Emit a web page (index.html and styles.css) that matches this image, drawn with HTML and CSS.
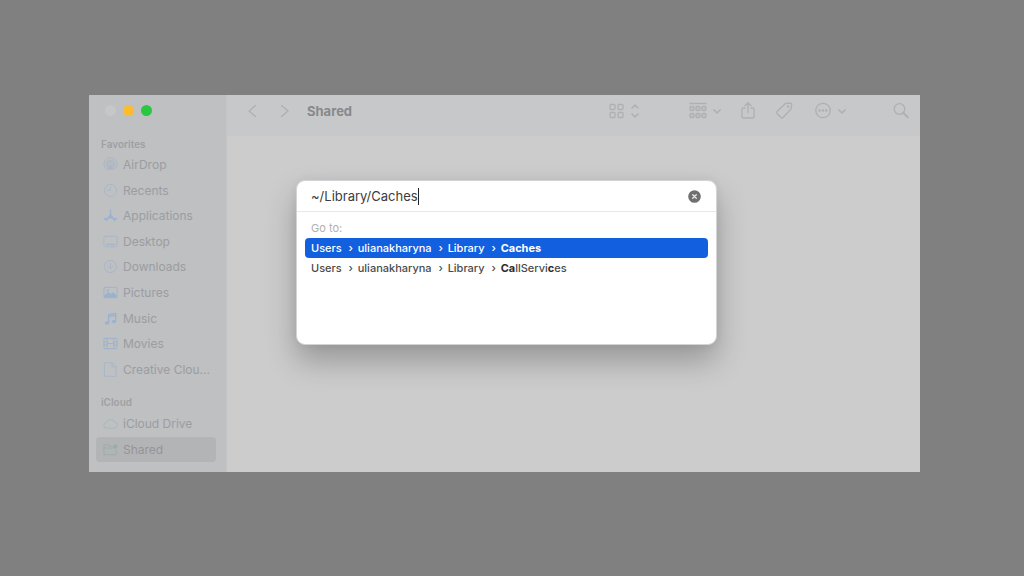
FILE: index.html
```html
<!DOCTYPE html>
<html lang="en">
<head>
<meta charset="utf-8">
<meta name="viewport" content="width=device-width, initial-scale=1">
<title>Shared</title>
<link rel="stylesheet" href="styles.css">
</head>
<body>
<div class="window">
  <aside class="sidebar">
    <div class="lights">
      <button class="light" aria-label="Close"></button>
      <button class="light light-min" aria-label="Minimize"></button>
      <button class="light light-max" aria-label="Zoom"></button>
    </div>
    <h2 class="group">Favorites</h2>
    <nav class="places favorites" aria-label="Favorites">
      <a class="place" href="#"><svg class="icon" viewBox="0 0 16 16"><path d="M4 13.500A7 7 0 1 1 12 13.500M5 11A4 4 0 1 1 11 11"/><path d="M8 8l3 5.500H5z" fill="currentColor" stroke="none"/><circle cx="8" cy="8" r="5.500" fill="currentColor" fill-opacity=".4" stroke="none"/></svg>AirDrop</a>
      <a class="place" href="#"><svg class="icon" viewBox="0 0 16 16"><circle cx="8" cy="8" r="6.500"/><path d="M8 4.500V8H5"/></svg>Recents</a>
      <a class="place" href="#"><svg class="icon strong" viewBox="0 0 16 16"><path d="M8 2.500v5L3.500 13M8 7.500l4.500 5.500M5.500 10.500h5M1.500 11.500h3M11.500 11.500h3" stroke-width="1.600"/></svg>Applications</a>
      <a class="place" href="#"><svg class="icon" viewBox="0 0 16 16"><rect x="1" y="2.500" width="14" height="11" rx="1.500"/><path d="M4 11h8" stroke-width="2"/></svg>Desktop</a>
      <a class="place" href="#"><svg class="icon" viewBox="0 0 16 16"><circle cx="8" cy="8" r="6.500"/><path d="M8 4.500v6M5.500 8.200L8 10.700l2.500-2.500"/></svg>Downloads</a>
      <a class="place" href="#"><svg class="icon strong" viewBox="0 0 16 16"><rect x="1" y="2.500" width="14" height="11" rx="1.500"/><path d="M2 11l3.500-3 3 2 2.500-2 3 3v2H2z" fill="currentColor"/><circle cx="5" cy="5.800" r=".8"/></svg>Pictures</a>
      <a class="place" href="#"><svg class="icon strong" viewBox="0 0 16 16"><path d="M6 12.500V4l7.500-1.500v8.500M6 6l7.500-1.500" stroke-width="1.500"/><ellipse cx="4.200" cy="12.800" rx="1.900" ry="1.300" fill="currentColor"/><ellipse cx="11.700" cy="11.300" rx="1.900" ry="1.300" fill="currentColor"/></svg>Music</a>
      <a class="place" href="#"><svg class="icon strong" viewBox="0 0 16 16"><rect x="1" y="2.500" width="14" height="11" rx="1"/><path d="M4.500 3v10M11.500 3v10M4.500 8h7M1.500 6.300h3M1.500 9.700h3M11.500 6.300h3M11.500 9.700h3"/></svg>Movies</a>
      <a class="place" href="#"><svg class="icon" viewBox="0 0 16 16"><path d="M2 .7h7.500l4.500 4.500v10.100H2zM9.500 .7v4.500H14"/></svg>Creative Clou...</a>
    </nav>
    <h2 class="group">iCloud</h2>
    <nav class="places cloud" aria-label="iCloud">
      <a class="place" href="#"><svg class="icon" viewBox="0 0 16 16"><path d="M4 13a3 3 0 0 1-.2-6 4.400 4.400 0 0 1 8.400-.4 3.200 3.200 0 0 1 .1 6.400z"/></svg>iCloud Drive</a>
      <a class="place current" href="#" aria-current="page"><svg class="icon" viewBox="0 0 16 16"><path d="M9 4.500H6.500L5.500 3H1v10.500h13V8.500M1 6.500h9"/><circle cx="13" cy="4.800" r="2" fill="currentColor"/></svg>Shared</a>
    </nav>
  </aside>
  <main class="content">
    <header class="toolbar">
      <button class="tool back" aria-label="Back"><svg width="10" height="16" viewBox="0 0 10 16"><path d="M8.500 2.500L2 8l6.500 5.500"/></svg></button>
      <button class="tool forward" aria-label="Forward"><svg width="10" height="16" viewBox="0 0 10 16"><path d="M1.500 2.500L8 8l-6.500 5.500"/></svg></button>
      <h1 class="title">Shared</h1>
      <button class="tool view" aria-label="View as icons"><svg width="30" height="16" viewBox="0 0 30 16"><rect x="1" y="1.500" width="5" height="5" rx="1"/><rect x="9" y="1.500" width="5" height="5" rx="1"/><rect x="1" y="9.500" width="5" height="5" rx="1"/><rect x="9" y="9.500" width="5" height="5" rx="1"/><path d="M23 5l3-3 3 3M23 11l3 3 3-3" stroke-width="1.500"/></svg></button>
      <button class="tool arrange" aria-label="Group items"><svg width="32" height="18" viewBox="0 0 32 18"><path d="M1 1.500h16"/><path d="M25 8l3 3 3-3" stroke-width="1.700"/><g fill="currentColor" fill-opacity=".3"><rect x="1" y="4.500" width="4" height="4" rx="1"/><rect x="7" y="4.500" width="4" height="4" rx="1"/><rect x="13" y="4.500" width="4" height="4" rx="1"/><rect x="1" y="11.500" width="4" height="4" rx="1"/><rect x="7" y="11.500" width="4" height="4" rx="1"/><rect x="13" y="11.500" width="4" height="4" rx="1"/></g></svg></button>
      <button class="tool share" aria-label="Share"><svg width="16" height="18" viewBox="0 0 16 18"><path d="M5 6H3q-1 0-1 1v8q0 1 1 1h10q1 0 1-1V7q0-1-1-1h-2M8 10.500V1M5 3.800L8 .8l3 3"/></svg></button>
      <button class="tool tag" aria-label="Tags"><svg width="18" height="18" viewBox="0 0 18 18"><path d="M10.500 1.500l5-.4q1.200 0 1.200 1.200L16 7l-8 8.500q-1 1-2 0l-4-4q-1-1 0-2z"/><circle cx="13" cy="4.500" r=".6"/></svg></button>
      <button class="tool more" aria-label="More"><svg width="32" height="18" viewBox="0 0 32 18"><circle cx="9" cy="8.500" r="7.200"/><path d="M25 8l3 3 3-3" stroke-width="1.700"/><circle cx="5.700" cy="8.500" r=".6"/><circle cx="9" cy="8.500" r=".6"/><circle cx="12.300" cy="8.500" r=".6"/></svg></button>
      <button class="tool search" aria-label="Search"><svg width="16" height="16" viewBox="0 0 16 16"><circle cx="6.500" cy="6" r="5.300"/><path d="M10.500 10l4.300 4.300" stroke-width="2"/></svg></button>
    </header>
  </main>
  <section class="dialog" role="dialog" aria-label="Go to folder">
    <div class="path-bar">
      <input class="path" type="text" value="~/Library/Caches" aria-label="Folder path" spellcheck="false"><span class="caret"></span>
      <button class="clear" aria-label="Clear"><svg width="13" height="13" viewBox="0 0 13 13"><circle cx="6.500" cy="6.500" r="6.300" fill="#707070" stroke="none"/><path d="M4.700 4.700l3.600 3.600M8.300 4.700L4.700 8.300" stroke="#e8e8e8" stroke-width="1.300"/></svg></button>
    </div>
    <div class="results">
      <h2 class="hint">Go to:</h2>
      <a class="result selected" href="#"><span>Users</span><i class="sep">›</i><span>ulianakharyna</span><i class="sep">›</i><span>Library</span><i class="sep">›</i><b>Caches</b></a>
      <a class="result" href="#"><span>Users</span><i class="sep">›</i><span>ulianakharyna</span><i class="sep">›</i><span>Library</span><i class="sep">›</i><span><b>Ca</b>llServi<b>c</b>es</span></a>
    </div>
  </section>
</div>
</body>
</html>
```
FILE: styles.css
```css
* { box-sizing: border-box; }

body {
  margin: 0;
  min-height: 100vh;
  display: flex;
  padding: 95px 104px 104px 89px;
  background: #808080;
  font-family: Inter, "Liberation Sans", sans-serif;
  font-size: 12px;
}

a { color: inherit; text-decoration: none; }
h1, h2 { margin: 0; }
button { border: 0; padding: 0; background: none; color: inherit; }

svg {
  display: block;
  fill: none;
  stroke: currentColor;
  stroke-linecap: round;
  stroke-linejoin: round;
}

.window {
  position: relative;
  flex: 1;
  display: flex;
  background: #cccccc;
}

.sidebar {
  width: 138px;
  flex: none;
  padding: 10px 10px 10px 7px;
  background: #bec0c2;
  border-right: 1px solid #c4c5c6;
  color: #9b9da0;
}

.lights {
  display: flex;
  gap: 7px;
  padding-left: 9px;
  margin-bottom: 21px;
}

.light {
  width: 11px;
  height: 11px;
  border-radius: 50%;
  background: #c6c7c8;
}

.light-min { background: #fdbc2e; }
.light-max { background: #28c840; }

.group {
  padding-left: 5px;
  font-size: 10px;
  font-weight: 600;
  line-height: 14px;
  color: #9fa1a3;
}

.places {
  display: grid;
  grid-auto-rows: 1fr;
}

.favorites { height: 230px; margin: 1px 0 13px; }
.cloud { height: 51px; margin-top: 2px; }

.place {
  display: flex;
  align-items: center;
  gap: 5px;
  padding-left: 7px;
  border-radius: 4px;
}

.current { background: #b3b4b6; color: #939597; }

.icon {
  width: 15px;
  height: 15px;
  flex: none;
  color: #a9b5c5;
}

.icon.strong { color: #9bb2cf; }
.cloud .icon { color: #a5b7b9; }
.cloud .current .icon { color: #9aadae; }

.content { flex: 1; }

.toolbar {
  display: flex;
  align-items: center;
  height: 41px;
  padding: 0 11px 10px 20px;
  background: #c7c8ca;
  color: #aeb0b2;
}

.tool svg { stroke-width: 1.3; }
.forward { margin: 0 17px 0 23px; }

.title {
  flex: 1;
  font-size: 13px;
  font-weight: 700;
  color: #88898b;
}

.arrange { margin-left: 50px; }
.share { margin-left: 19px; }
.tag { margin-left: 19px; }
.more { margin-left: 21px; }
.search { margin-left: 47px; }

.dialog {
  position: absolute;
  top: 85px;
  left: 207px;
  width: 421px;
  min-height: 165px;
  background: #ffffff;
  border: 1px solid #d4d4d4;
  border-radius: 9px;
  box-shadow: 0 16px 30px rgba(0, 0, 0, 0.26), 0 0 10px rgba(0, 0, 0, 0.06);
  color: #4a4a4a;
}

.path-bar {
  display: flex;
  align-items: center;
  height: 31px;
  padding: 0 15px 0 14px;
  border-bottom: 1px solid #e8e8e8;
}

.path {
  field-sizing: content;
  border: 0;
  padding: 0;
  outline: 0;
  background: none;
  font-family: inherit;
  font-size: 13px;
  color: #3c3c3c;
}

.caret { width: 1px; height: 17px; background: #222222; }
.clear { margin-left: auto; }

.results { padding: 9px 8px; }

.hint {
  padding: 0 6px;
  margin-bottom: 3px;
  font-size: 11px;
  font-weight: 400;
  line-height: 14px;
  color: #b0b0b0;
}

.result {
  display: flex;
  padding: 0 6px;
  border-radius: 4px;
  font-size: 11px;
  font-weight: 500;
  line-height: 20px;
}

.selected { background: #1260e0; color: #ffffff; }
.result b { font-weight: 700; }
.selected b { color: #ffffff; }
.result:not(.selected) b { color: #2c2c2c; }

.sep {
  width: 16px;
  padding-left: 2px;
  font-style: normal;
  text-align: center;
}
```
